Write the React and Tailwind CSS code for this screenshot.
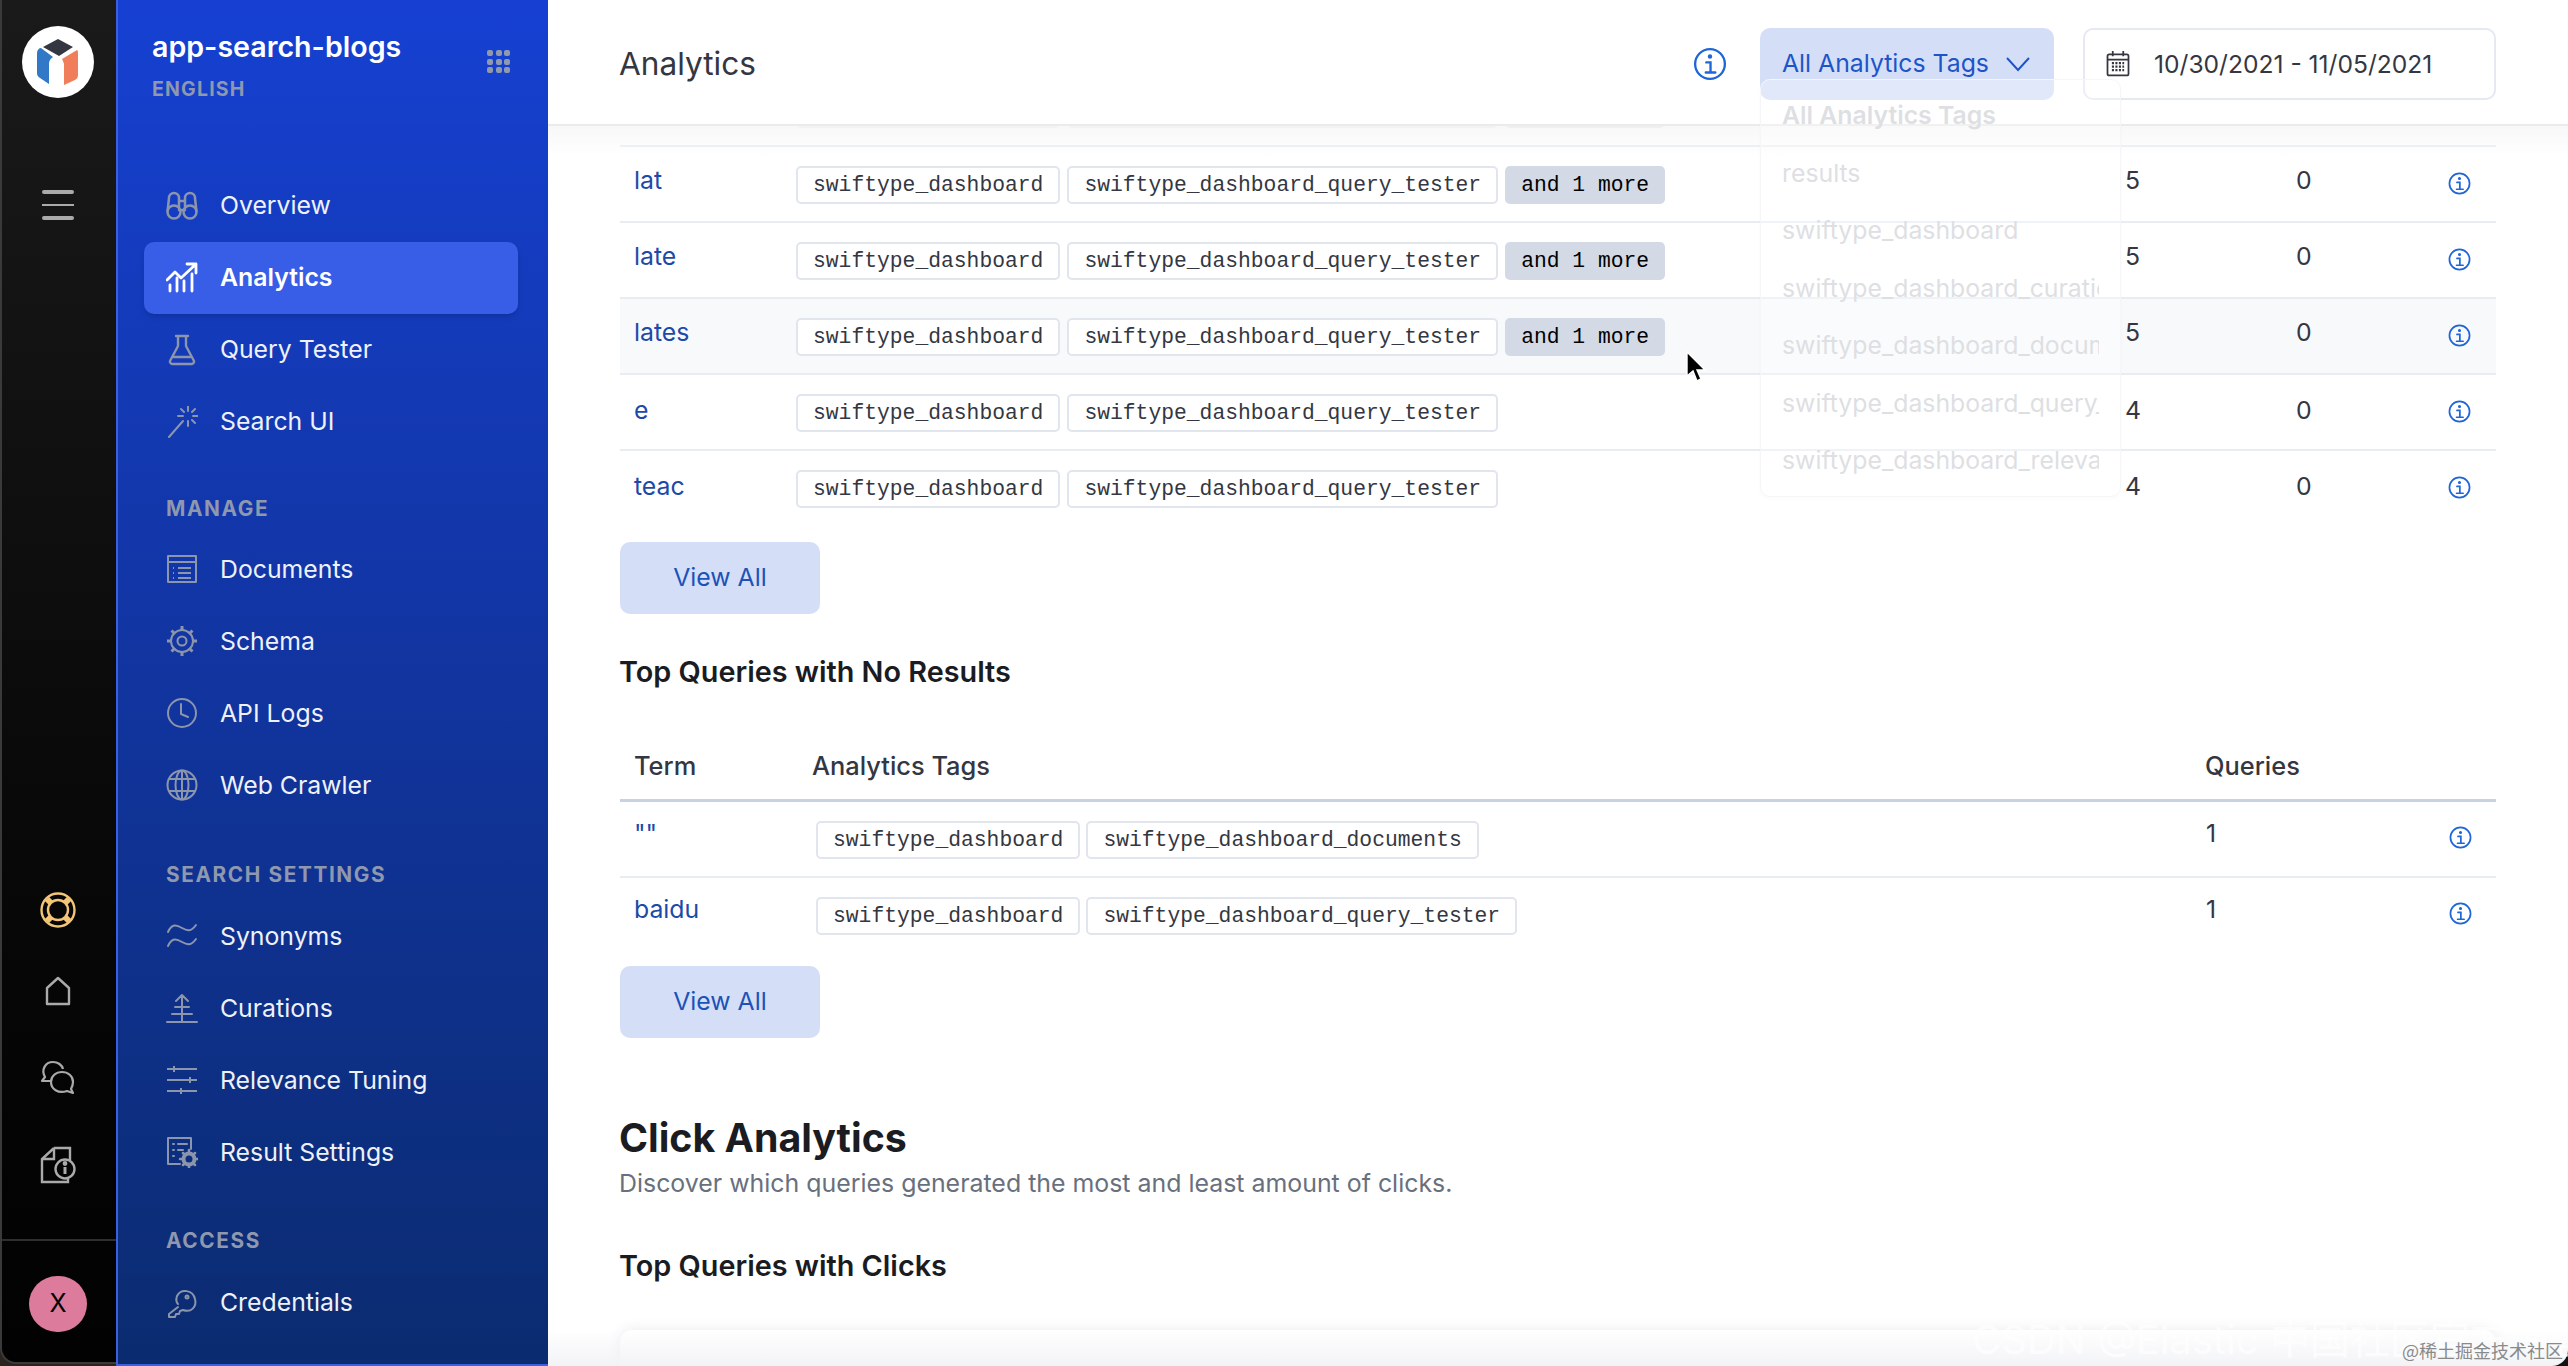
import React from "react";

const sw = { fill: "none", stroke: "currentColor", strokeWidth: 2, strokeLinecap: "round", strokeLinejoin: "round" };

const Svg = ({ s = 32, children, className = "" }) => (
  <svg width={s} height={s} viewBox="0 0 32 32" className={className} {...sw}>{children}</svg>
);

const Binoculars = () => (
  <Svg><g strokeWidth="2.5"><circle cx="8" cy="22" r="6.5" /><circle cx="24" cy="22" r="6.5" /><path d="M1.6 21 3 8a5 5 0 0 1 10 0v10M30.4 21 29 8a5 5 0 0 0-10 0v10M13 11h6M13 20h6" /></g></Svg>
);
const AnalyticsIcon = () => (
  <Svg><path d="M1 18 9 10l6 6L29 3M21 2h9v9" strokeWidth="2.8" /><path d="M4 29v-6M11 29V16M18 29V19M26 29V12" strokeWidth="2.8" /></Svg>
);
const Flask = () => (
  <Svg><g strokeWidth="2.4"><path d="M10 2h12M12 2v10L4 27a2.5 2.5 0 0 0 2 3h20a2.5 2.5 0 0 0 2-3l-8-15V2M8 23h16" /></g></Svg>
);
const Wand = () => (
  <Svg><path d="M3 31 17 15M22 0v5M22 15v5M12 10h5M27 10h5M15 3l3 3M29 3l-3 3M26 14l3 3" /></Svg>
);
const Docs = () => (
  <Svg><rect x="2" y="3" width="28" height="26" /><path d="M2 9h28M7 15h1M12 15h13M7 20h1M12 20h13M7 25h1M12 25h13" strokeLinecap="butt" /></Svg>
);
const Gear = () => (
  <Svg><circle cx="16" cy="16" r="11" /><circle cx="16" cy="16" r="4.5" /><path d="M16 1v5M16 26v5M1 16h5M26 16h5M5.5 5.5l3.5 3.5M23 23l3.5 3.5M5.5 26.5 9 23M23 9l3.5-3.5" strokeWidth="3" strokeLinecap="butt" /></Svg>
);
const Clock = () => (
  <Svg><circle cx="16" cy="16" r="14" /><path d="M15 7v10l7 3" /></Svg>
);
const Globe = () => (
  <Svg><circle cx="16" cy="16" r="14.5" /><ellipse cx="16" cy="16" rx="6.5" ry="14.5" /><path d="M16 2v28M3 10h26M3 22h26" /></Svg>
);
const Waves = () => (
  <Svg><path d="M2 12C6 3 11 5 16 8s9 4 14-3M2 26c4-9 9-7 14-4s9 4 14-3" /></Svg>
);
const Tree = () => (
  <Svg><path d="M1 30h30M16 30V3M10 9l6-6 6 6M9 15h14M6 22h20" /></Svg>
);
const Sliders = () => (
  <Svg><path d="M1 5h30M1 16h30M1 27h30M8 2v6M24 13v6M15 24v6" strokeLinecap="butt" /></Svg>
);
const ResultIcon = () => (
  <Svg>
    <path d="M25 13V2H2v26h12M7 8h1M12 8h9M7 14h1M12 14h5M7 20h1" />
    <circle cx="23" cy="23" r="5.5" stroke="currentColor" strokeWidth="4" />
    <path d="M23 14v3M23 29v3M14 23h3M29 23h3M17 17l2 2M27 27l2 2M17 29l2-2M27 19l2-2" strokeWidth="2.5" />
  </Svg>
);
const Key = () => (
  <Svg><path d="M12 20 3 27v3h6l1-3h3l1-3 3-1c8 3 14-3 12-11-2-9-14-11-18-3-1 3-1 6 1 8" /><circle cx="21" cy="10" r="1.5" /></Svg>
);
const Info = ({ s = 23, w = 2.4 }) => (
  <svg width={s} height={s} viewBox="0 0 32 32" fill="none" stroke="currentColor" strokeWidth={w} className="shrink-0">
    <circle cx="16" cy="16" r="14" />
    <path d="M12.5 14.5H16.5V23.5M12 24H21" strokeLinecap="round" />
    <circle cx="16" cy="9" r="1" fill="currentColor" />
  </svg>
);

const Logo = () => (
  <div className="flex h-[72px] w-[72px] items-center justify-center rounded-full bg-white">
    <svg width="42" height="46" viewBox="0 0 42 46">
      <path d="M6 8 21 0l15 8-14 9z" fill="#343741" />
      <path d="M0 14c0-3 2-5 4-5l12 9c-3 2-4 4-4 7v20L3 39c-2-1-3-3-3-5z" fill="#3179c6" />
      <path d="M25 20 40 11c1 1 1 1 1 4v21c0 2-1 4-3 5L27 46V26c0-2-1-4-2-6z" fill="#f07e5a" />
    </svg>
  </div>
);

const Rail = () => (
  <div className="flex h-[1364px] w-[116px] shrink-0 flex-col items-center rounded-bl-[16px] border-l-2 border-b-2 border-[#3a3a3a] bg-gradient-to-b from-[#1a1a1a] to-[#020202] pr-[2px] text-[#aaaaaa]">
    <div className="mt-[26px]"><Logo /></div>
    <div className="mt-[92px] flex w-8 flex-col gap-[10px]">
      <div className="h-1 rounded-sm bg-[#aaaaaa]" />
      <div className="h-[2px] bg-[#aaaaaa]" />
      <div className="h-1 rounded-sm bg-[#aaaaaa]" />
    </div>
    <svg width="36" height="36" viewBox="0 0 36 36" fill="none" className="mt-[672px] text-[#f3c677]" stroke="currentColor" strokeWidth="2.4">
      <circle cx="18" cy="18" r="16.5" />
      <circle cx="18" cy="18" r="10" />
      <path d="M7 7l4 4M29 7l-4 4M7 29l4-4M29 29l-4-4" strokeWidth="6" />
    </svg>
    <svg width="26" height="30" viewBox="0 0 26 30" fill="none" stroke="currentColor" strokeWidth="2.4" className="mt-[48px]">
      <path d="M2 12 13 2l11 10v16H2z" strokeLinejoin="round" />
    </svg>
    <svg width="36" height="36" viewBox="0 0 36 36" fill="none" stroke="currentColor" strokeWidth="2.2" className="mt-[54px]">
      <path d="M10 21H2l3-4C1 10 5 2 13 2c5 0 9 3 10 7" strokeLinejoin="round" />
      <path d="M33 33l-6-2c-9 3-16-2-16-9 0-6 5-10 11-10s11 4 11 10c0 3-1 5-2 7z" strokeLinejoin="round" />
    </svg>
    <svg width="36" height="38" viewBox="0 0 36 38" fill="none" stroke="currentColor" strokeWidth="2.4" className="mt-[50px]">
      <path d="M14 2h16v12M14 2 2 13v23h26v-5M14 2v11H2" />
      <circle cx="25" cy="23" r="9.5" fill="#050505" />
      <path d="M25 21v7" strokeWidth="3" />
      <circle cx="25" cy="17.5" r="1.2" fill="currentColor" />
    </svg>
    <div className="mt-[55px] h-[2px] w-[114px] self-start bg-[#2e2e2e]" />
    <div className="mt-[35px] flex h-[56px] w-[58px] items-center justify-center rounded-full bg-[#dd7b9c] font-['Inter',sans-serif] text-[25px] text-black">X</div>
  </div>
);

const NavItem = ({ Icon, label, active }) => (
  <div className={`flex h-[72px] w-[374px] items-center rounded-[10px] pl-[22px] ${active ? "bg-[#385de6] font-semibold text-white shadow-md" : "text-[#eef1f8]"}`}>
    <span className={`flex w-8 justify-center ${active ? "text-white" : "text-[#8b95ab]"}`}><Icon /></span>
    <span className="ml-[22px] text-[24.8px] leading-none">{label}</span>
  </div>
);

const SectionLabel = ({ children, className = "" }) => (
  <div className={`pl-[22px] text-[20.8px] font-bold leading-none tracking-[1.6px] text-[#8e98ae] ${className}`}>{children}</div>
);

const Sidebar = () => (
  <div className="flex h-[1366px] w-[432px] shrink-0 flex-col border-l-2 border-b-2 border-[#3a5fe0] bg-gradient-to-b from-[#1640d2] via-[#11349f] to-[#0b2b70] pl-[26px] font-['Inter',sans-serif]">
    <div className="mt-[30px] flex items-start pl-[8px]">
      <div>
        <div className="text-[28.6px] font-semibold leading-[34px] text-white">app-search-blogs</div>
        <div className="mt-[16px] text-[19.5px] font-bold leading-none tracking-[1.2px] text-[#8e98ae]">ENGLISH</div>
      </div>
      <div className="ml-[86px] mt-[20px] grid grid-cols-3 gap-[2.5px]">
        {Array.from({ length: 9 }).map((_, i) => <div key={i} className="h-[6px] w-[6px] rounded-[2px] bg-[#9099ae]" />)}
      </div>
    </div>
    <div className="mt-[70px]">
      <NavItem Icon={Binoculars} label="Overview" />
      <NavItem Icon={AnalyticsIcon} label="Analytics" active />
      <NavItem Icon={Flask} label="Query Tester" />
      <NavItem Icon={Wand} label="Search UI" />
    </div>
    <SectionLabel className="mt-[41px]">MANAGE</SectionLabel>
    <div className="mt-[14px]">
      <NavItem Icon={Docs} label="Documents" />
      <NavItem Icon={Gear} label="Schema" />
      <NavItem Icon={Clock} label="API Logs" />
      <NavItem Icon={Globe} label="Web Crawler" />
    </div>
    <SectionLabel className="mt-[44px]">SEARCH SETTINGS</SectionLabel>
    <div className="mt-[14px]">
      <NavItem Icon={Waves} label="Synonyms" />
      <NavItem Icon={Tree} label="Curations" />
      <NavItem Icon={Sliders} label="Relevance Tuning" />
      <NavItem Icon={ResultIcon} label="Result Settings" />
    </div>
    <SectionLabel className="mt-[43px]">ACCESS</SectionLabel>
    <div className="mt-[15px]">
      <NavItem Icon={Key} label="Credentials" />
    </div>
  </div>
);

const Tag = ({ children, more }) => (
  <span className={`inline-flex h-[38px] items-center whitespace-pre rounded-[5px] pt-[2px] font-['Liberation_Mono',monospace] text-[21.33px] leading-none ${more ? "bg-[#d3dae6] px-[16px] text-black" : "border-2 border-[#e0e5ee] bg-white px-[15px] text-[#343741]"}`}>{children}</span>
);

const rows = [
  ["la", 5, 0, true],
  ["lat", 5, 0, true],
  ["late", 5, 0, true],
  ["lates", 5, 0, true, true],
  ["e", 4, 0, false],
  ["teac", 4, 0, false],
];

const Row = ({ term, q, c, more, hover }) => (
  <div className={`flex h-[76px] items-start border-b-2 border-[#e9edf3] last:border-b-0 ${hover ? "bg-[#f8f9fb]" : ""}`}>
    <div className={`w-[176px] pl-[14px] text-[24.8px] leading-[38px] text-[#1d4aa8] ${more ? "pt-[14px]" : "pt-[16px]"}`}>{term}</div>
    <div className="flex w-[1329px] gap-[7px] pt-[19px]">
      <Tag>swiftype_dashboard</Tag>
      <Tag>swiftype_dashboard_query_tester</Tag>
      {more && <Tag more>and 1 more</Tag>}
    </div>
    <div className={`w-[171px] text-[24.8px] leading-[38px] text-[#343741] ${more ? "pt-[14px]" : "pt-[16px]"}`}>{q}</div>
    <div className={`w-[152px] text-[24.8px] leading-[38px] text-[#343741] ${more ? "pt-[14px]" : "pt-[16px]"}`}>{c}</div>
    <div className="pt-[25px] text-[#1f66d8]"><Info /></div>
  </div>
);

const Button = () => (
  <div className="flex h-[72px] w-[200px] items-center justify-center rounded-[10px] bg-[#d4dff7] text-[24.8px] text-[#1d52b8]">View All</div>
);

const Row2 = ({ term, tags }) => (
  <div className="flex h-[76px] items-start border-b-2 border-[#e9edf3] last:border-b-0">
    <div className="w-[196px] pl-[14px] pt-[12px] text-[24.8px] leading-[38px] text-[#1d4aa8]">{term}</div>
    <div className="flex w-[1390px] gap-[6px] pt-[19px]">
      {tags.map((t) => <Tag key={t}>{t}</Tag>)}
    </div>
    <div className="w-[243px] pt-[12px] text-[24.8px] leading-[38px] text-[#343741]">1</div>
    <div className="pt-[24px] text-[#1f66d8]"><Info /></div>
  </div>
);

const Header = () => (
  <div className="relative z-20 flex h-[126px] shrink-0 items-center border-b-2 border-[#ebebeb] bg-white pl-[71px] pr-[72px] pt-[4px]">
    <div className="flex-1 text-[31.6px] text-[#343741]">Analytics</div>
    <span className="text-[#1f66d8]"><Info s={34} w={2.2} /></span>
    <div className="relative ml-[33px] flex h-[72px] w-[294px] items-center rounded-[10px] bg-[#d4dff7] pl-[22px] text-[24.8px] text-[#1d55c8]">
      All Analytics Tags
      <svg width="26" height="16" viewBox="0 0 26 16" fill="none" stroke="currentColor" strokeWidth="2" className="ml-[16px]"><path d="M2 2l11 12L24 2" /></svg>
    </div>
    <div className="ml-[29px] flex h-[72px] w-[413px] items-center rounded-[10px] border-2 border-[#e6e8f2] pl-[21px] text-[24.6px] text-[#343741]">
      <svg width="24" height="28" viewBox="0 0 26 32" fill="none" stroke="#343741" strokeWidth="2">
        <rect x="1" y="5" width="24" height="24" rx="2" />
        <path d="M1 11h24M7 1v6M19 1v6" />
        <path d="M6 15h14M6 19h14M6 23h14" strokeWidth="2.4" strokeDasharray="2.4 1.6" />
      </svg>
      <span className="ml-[24px]">10/30/2021 - 11/05/2021</span>
    </div>
  </div>
);

const Menu = () => (
  <div className="absolute left-[1212px] top-[79px] z-30 flex h-[418px] w-[361px] flex-col gap-0 rounded-[10px] border border-[#f6f6f8] bg-white/30 pl-[21px] pr-[21px] pt-[13px] text-[24.8px] leading-[44px] text-[#dedfe3] shadow-[0_2px_4px_rgba(0,0,0,0.02)]">
    {["All Analytics Tags", "results", "swiftype_dashboard", "swiftype_dashboard_curations", "swiftype_dashboard_documents", "swiftype_dashboard_query_tester", "swiftype_dashboard_relevance"].map((t, i) => (
      <div key={t} className={`h-[58px] overflow-hidden whitespace-nowrap ${i === 0 ? "font-semibold" : ""}`}>{t}</div>
    ))}
  </div>
);

const Main = () => (
  <div className="relative flex h-[1366px] min-w-0 flex-1 flex-col overflow-hidden bg-white font-['Inter',sans-serif]">
    <Header />
    <Menu />
    <div className="pointer-events-none absolute left-0 right-0 top-[126px] z-10 h-[30px] bg-gradient-to-b from-[#f6f6f6]/80 to-white/0" />
    <div className="mt-[-55px] px-[72px]">
      <div>
        {rows.map((r, i) => <Row key={i} term={r[0]} q={r[1]} c={r[2]} more={r[3]} hover={r[4]} />)}
      </div>
      <div className="mt-[15px]"><Button /></div>
      <div className="-ml-px mt-[42px] text-[28.8px] font-semibold leading-[32px] text-[#1a1c21]">Top Queries with No Results</div>
      <div className="mt-[62px] flex h-[52px] items-start border-b-[3px] border-[#c9d2e3] text-[25.4px] font-medium leading-[32px] text-[#343741]">
        <div className="w-[192px] pl-[14px]">Term</div>
        <div className="w-[1393px]">Analytics Tags</div>
        <div>Queries</div>
      </div>
      <div>
        <Row2 term={'""'} tags={["swiftype_dashboard", "swiftype_dashboard_documents"]} />
        <Row2 term="baidu" tags={["swiftype_dashboard", "swiftype_dashboard_query_tester"]} />
      </div>
      <div className="mt-[12px]"><Button /></div>
      <div className="-ml-px mt-[77px] text-[39.3px] font-bold leading-[46px] text-[#1a1c21]">Click Analytics</div>
      <div className="-ml-px mt-[4px] text-[24.9px] leading-[36px] text-[#69707d]">Discover which queries generated the most and least amount of clicks.</div>
      <div className="-ml-px mt-[49px] text-[28.8px] font-semibold leading-[32px] text-[#1a1c21]">Top Queries with Clicks</div>
      <div className="mt-[48px] h-[80px] rounded-t-[12px] bg-white shadow-[0_0_14px_rgba(50,60,90,0.1)]" />
    </div>
    <div className="absolute bottom-0 left-0 right-0 z-20 h-[36px] bg-gradient-to-b from-white/0 to-[#f2f3f6]" />
    <svg width="20" height="32" viewBox="0 0 20 32" className="absolute left-[1138px] top-[351px] z-40">
      <path d="M1 1v24l6-5 4 10 4-2-4-9h8z" fill="#000" stroke="#fff" strokeWidth="1.4" />
    </svg>
    <div className="absolute left-[1424px] top-[1320px] z-40 whitespace-nowrap font-['Inter','Noto_Sans_CJK_SC',sans-serif] text-[40px] leading-[40px] text-white/70">CSDN @Elastic 中国社区官方博客</div>
    <div className="absolute left-[1854px] top-[1340px] z-40 whitespace-nowrap font-['Noto_Sans_CJK_SC',sans-serif] text-[18px] leading-[20px] text-[#8a8a8a]">@稀土掘金技术社区</div>
    <div className="absolute bottom-0 right-0 z-30 h-[16px] w-[16px] bg-[#111] [clip-path:path('M16_0V16H0A16_16_0_0_0_16_0Z')]" />
  </div>
);

export default function App() {
  return (
    <div className="flex h-[1366px] w-[2568px] overflow-hidden bg-[#2a2320]">
      <Rail />
      <Sidebar />
      <Main />
    </div>
  );
}
